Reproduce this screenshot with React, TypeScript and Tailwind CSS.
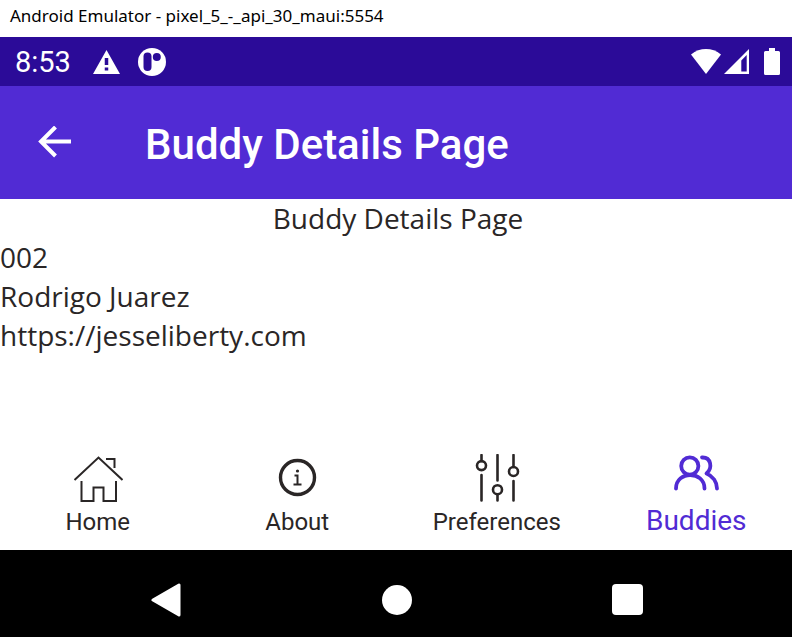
import type { ReactNode } from 'react';

function StatusBar() {
  return (
    <div className="flex h-[49px] items-center bg-[#2b0b98] pl-[15px] pr-3 text-white">
      <span className="w-[78px] font-['Roboto',sans-serif] text-[29px] leading-8">8:53</span>
      <svg className="h-[24px] w-[27px]" viewBox="0 0 27 24" fill="none" aria-label="Warning">
        <path d="M13.5 0 27 24H0Z" fill="currentColor" />
        <path d="M13.5 8v7M13.5 17.500v3" stroke="#2b0b98" strokeWidth="3.500" />
      </svg>
      <svg className="ml-[18px] h-7 w-7" viewBox="0 0 28 28" aria-label="App notification">
        <circle cx="14" cy="14" r="14" fill="currentColor" />
        <rect x="5.500" y="4.500" width="8" height="18.500" rx="4" fill="#2b0b98" />
        <circle cx="18.800" cy="9" r="4" fill="#2b0b98" />
      </svg>
      <div className="ml-auto flex items-center">
        <svg className="h-[25px] w-[30px]" viewBox="0 0 30 25" aria-label="Wi-Fi">
          <path d="M15 25 0 5.500C9-1.800 21-1.800 30 5.500Z" fill="currentColor" />
        </svg>
        <svg className="ml-[3px] h-[25px] w-[25px]" viewBox="0 0 25 25" aria-label="Mobile signal">
          <path fillRule="evenodd" d="M25 0v25H0ZM22.700 6 17.300 11.500v11h5.400Z" fill="currentColor" />
        </svg>
        <svg className="ml-[15px] h-[27px] w-4" viewBox="0 0 16 27" aria-label="Battery">
          <path d="M5 0h6v3h3.500q1.500 0 1.500 1.500v21q0 1.500-1.500 1.500h-13q-1.500 0-1.500-1.500v-21q0-1.500 1.500-1.500H5Z" fill="currentColor" />
        </svg>
      </div>
    </div>
  );
}

function HomeIcon() {
  return (
    <svg className="h-12 w-[50px]" viewBox="0 0 50 48" fill="none" stroke="currentColor" strokeWidth="2" aria-hidden="true">
      <path d="M1.500 26 25.500 3.500 49.500 26M33 5h8.500v9M8.500 27v20H20.500V33.500h10V47H43V27" />
    </svg>
  );
}

function AboutIcon() {
  return (
    <svg className="h-12 w-[50px]" viewBox="0 0 50 48" fill="none" stroke="currentColor" aria-hidden="true">
      <circle cx="25.500" cy="23.500" r="17" strokeWidth="3.400" />
      <path d="M22.500 21.500h3v9M21.500 30.500h8" strokeWidth="2" />
      <circle cx="25.500" cy="17" r="1.600" fill="currentColor" stroke="none" />
    </svg>
  );
}

function PreferencesIcon() {
  return (
    <svg className="h-12 w-[50px]" viewBox="0 0 50 48" fill="none" stroke="currentColor" strokeWidth="2.600" strokeLinecap="round" aria-hidden="true">
      <path d="M9.500 1v6M9.500 21v25.500M25.500 1v25.500M25.500 41v5.500M41.500 1v12M41.500 27v19.500" />
      <circle cx="9.500" cy="11.600" r="4.500" />
      <circle cx="25.500" cy="35.700" r="4.500" />
      <circle cx="41.500" cy="17.500" r="4.500" />
    </svg>
  );
}

function BuddiesIcon() {
  return (
    <svg className="h-12 w-[50px]" viewBox="0 0 50 48" fill="none" stroke="currentColor" strokeWidth="3.800" strokeLinecap="round" strokeLinejoin="round" aria-hidden="true">
      <circle cx="18.800" cy="12" r="8.600" />
      <path d="M5 34.500C5 16.500 33.500 16.500 33.500 34.500M31 3.500C40 3 42 14 35.500 19.500C42 22 46 28 46 34.500" />
    </svg>
  );
}

function Tab({ icon, label, active = false }: { icon: ReactNode; label: string; active?: boolean }) {
  return (
    <a
      href={'#' + label.toLowerCase()}
      aria-current={active ? 'page' : undefined}
      className={
        active
          ? 'flex flex-col items-center text-[28px] leading-[38px] text-[#512bd4]'
          : 'flex flex-col items-center text-[24px] leading-10 text-[#2a2626]'
      }
    >
      {icon}
      <span>{label}</span>
    </a>
  );
}

export default function App() {
  return (
    <div className="flex min-h-screen flex-col overflow-hidden bg-white">
      <header className="flex h-[37px] items-center px-[10px] pb-[5px] font-['Noto_Sans',sans-serif] text-[17px] leading-6 text-black">
        Android Emulator - pixel_5_-_api_30_maui:5554
      </header>
      <StatusBar />
      <div className="flex h-[113px] items-center bg-[#512bd4] px-[38px] text-white">
        <button type="button" aria-label="Back" className="mr-[73px]">
          <svg className="h-[34px] w-[34px]" viewBox="0 0 34 34" fill="none" stroke="currentColor" strokeWidth="4" aria-hidden="true">
            <path d="M33 15.500H3M17.500 1 3 15.500l14.500 14.500" />
          </svg>
        </button>
        <h1 className="whitespace-nowrap pt-1 font-['Roboto',sans-serif] text-[42px] font-medium leading-[48px]">Buddy Details Page</h1>
      </div>
      <main className="-mr-1 flex-1 font-['Open_Sans',sans-serif] text-[28px] leading-[39px] text-[#2a2626]">
        <h2 className="text-center">Buddy Details Page</h2>
        <p>002</p>
        <p>Rodrigo Juarez</p>
        <p>https://jesseliberty.com</p>
      </main>
      <nav aria-label="Sections" className="-ml-0.5 -mr-1 grid h-24 grid-cols-4 font-['Roboto',sans-serif]">
        <Tab icon={<HomeIcon />} label="Home" />
        <Tab icon={<AboutIcon />} label="About" />
        <Tab icon={<PreferencesIcon />} label="Preferences" />
        <Tab icon={<BuddiesIcon />} label="Buddies" active />
      </nav>
      <div className="grid h-[87px] grid-cols-3 items-center justify-items-center bg-black pl-[51px] pr-[49px] pt-3 text-white">
        <button type="button" aria-label="System back">
          <svg className="h-[34px] w-[30px]" viewBox="0 0 30 34" fill="currentColor" stroke="currentColor" strokeWidth="3" strokeLinejoin="round" aria-hidden="true">
            <path d="M2 17 28 2v30Z" />
          </svg>
        </button>
        <button type="button" aria-label="System home" className="h-[30px] w-[30px] rounded-full bg-white" />
        <button type="button" aria-label="Recent apps" className="h-[31px] w-[31px] rounded-sm bg-white" />
      </div>
    </div>
  );
}
